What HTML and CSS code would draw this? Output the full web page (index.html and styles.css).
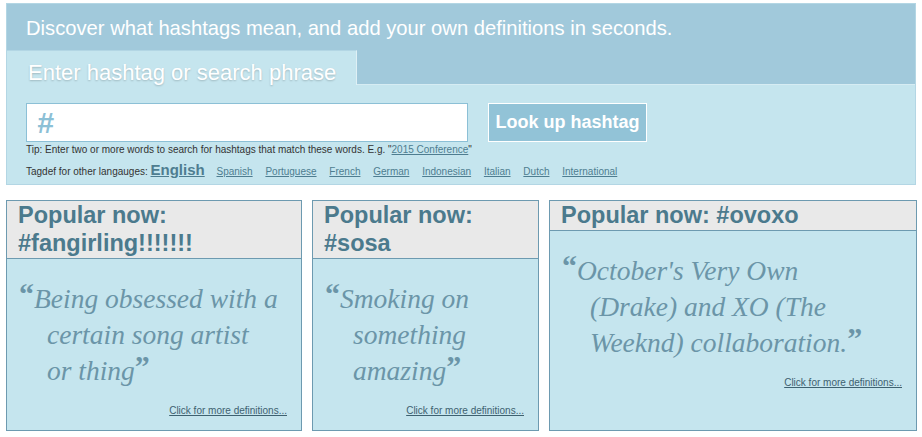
FILE: index.html
```html
<!DOCTYPE html>
<html>
<head>
  <title>Tagdef - Discover what hashtags mean</title>
  <link rel="stylesheet" href="styles.css">
</head>
<body>
  <div class="searchPanel">
    <div class="intro">
      <h2>Discover what hashtags mean, and add your own definitions in seconds.</h2>
      <div class="tab">Enter hashtag or search phrase</div>
    </div>

    <div class="searchForm">
      <div class="searchRow">
        <div class="hashInput"><span class="hashSign">#</span></div>
        <button class="lookupButton">Look up hashtag</button>
      </div>
      <p class="tip">Tip: Enter two or more words to search for hashtags that match these words. E.g. "<a href="#">2015 Conference</a>"</p>
      <p class="languages">
        Tagdef for other langauges:
        <a class="current" href="#">English</a>
        <a href="#">Spanish</a>
        <a href="#">Portuguese</a>
        <a href="#">French</a>
        <a href="#">German</a>
        <a href="#">Indonesian</a>
        <a href="#">Italian</a>
        <a href="#">Dutch</a>
        <a href="#">International</a>
      </p>
    </div>
  </div>

  <div class="popularGrid">
    <div class="popularBox">
      <h3>Popular now: #fangirling!!!!!!!</h3>
      <p class="quote"><span class="mark">&ldquo;</span>Being obsessed with a<br>certain song artist<br>or thing<span class="mark">&rdquo;</span></p>
      <p class="more"><a href="#">Click for more definitions...</a></p>
    </div>
    <div class="popularBox">
      <h3>Popular now: #sosa</h3>
      <p class="quote"><span class="mark">&ldquo;</span>Smoking on<br>something<br>amazing<span class="mark">&rdquo;</span></p>
      <p class="more"><a href="#">Click for more definitions...</a></p>
    </div>
    <div class="popularBox">
      <h3>Popular now: #ovoxo</h3>
      <p class="quote"><span class="mark">&ldquo;</span>October's Very Own<br>(Drake) and XO (The<br>Weeknd) collaboration.<span class="mark">&rdquo;</span></p>
      <p class="more"><a href="#">Click for more definitions...</a></p>
    </div>
  </div>
</body>
</html>
```

FILE: styles.css
```css
    body {
      font-family: "Liberation Sans", Arial, sans-serif;
      background: #fff;
      margin: 0;
      padding: 3px 6px;
    }

    .searchPanel {
      width: 910px;
      box-sizing: border-box;
      border: 1px solid #b3d6e4;
      background-color: #c5e5ee;
    }

    .intro {
      background-color: #a1c9db;
      border-bottom: 1px solid #d6ecf3;
      height: 81px;
      box-sizing: border-box;
      display: flex;
      flex-direction: column;
      justify-content: space-between;
    }

    .intro h2 {
      margin: 0;
      padding: 13px 19px 0;
      font-size: 20.2px;
      font-weight: normal;
      color: #fff;
    }

    .tab {
      width: 350px;
      height: 35px;
      box-sizing: border-box;
      margin-bottom: -1px;
      padding: 9px 21px 0;
      background-color: #c5e5ee;
      border-right: 1px solid #dff0f5;
      border-top: 1px solid #b3d6e4;
      color: #fff;
      font-size: 22px;
      line-height: 26px;
      white-space: nowrap;
      text-shadow: 0 1px 2px rgba(0, 0, 0, 0.2);
    }

    .searchForm {
      padding: 18px 19px 6px;
    }

    .searchRow {
      display: flex;
      gap: 20px;
    }

    .hashInput {
      width: 442px;
      height: 39px;
      box-sizing: border-box;
      background-color: #fff;
      border: 1px solid #8cc0d6;
      padding-left: 10px;
    }

    .hashSign {
      color: #8cc0d6;
      font-size: 30px;
      font-weight: bold;
      font-style: italic;
      line-height: 37px;
    }

    .lookupButton {
      width: 159px;
      height: 39px;
      background-color: #92c3d7;
      border: 1px solid #fff;
      color: #fff;
      font-family: "Liberation Sans", Arial, sans-serif;
      font-size: 18px;
      font-weight: bold;
      padding: 0;
    }

    .tip {
      margin: 2px 0 0;
      font-size: 10px;
      color: #333;
    }

    .tip a {
      color: #4e7d90;
    }

    .languages {
      margin: 6px 0 0;
      font-size: 10px;
      color: #333;
    }

    .languages a {
      color: #4e7d90;
      margin-right: 10px;
    }

    .languages a.current {
      font-size: 15px;
      font-weight: bold;
      margin-right: 9px;
    }

    .popularGrid {
      display: grid;
      grid-template-columns: 296px 227px 368px;
      gap: 10px;
      margin-top: 15px;
    }

    .popularBox {
      border: 1px solid #6d9ab0;
      background-color: #c5e5ee;
      box-sizing: border-box;
    }

    .popularBox h3 {
      margin: 0;
      padding: 0 11px 1px;
      background-color: #e9e9e9;
      border-bottom: 1px solid #6d9ab0;
      color: #4b7a8d;
      font-size: 23.5px;
      line-height: 28px;
    }

    .quote {
      margin: 0;
      padding: 22px 10px 0 40px;
      text-indent: -28px;
      font-family: "Liberation Serif", Georgia, serif;
      font-style: italic;
      font-size: 27.5px;
      line-height: 36px;
      color: #6b95a8;
    }

    .mark {
      font-style: normal;
      font-weight: bold;
      font-size: 30px;
      line-height: 0;
      vertical-align: 4px;
    }

    .more {
      margin: 16px 0 0;
      padding: 0 14px 14px 0;
      text-align: right;
      font-size: 10px;
    }

    .more a {
      color: #3e6170;
    }
```
